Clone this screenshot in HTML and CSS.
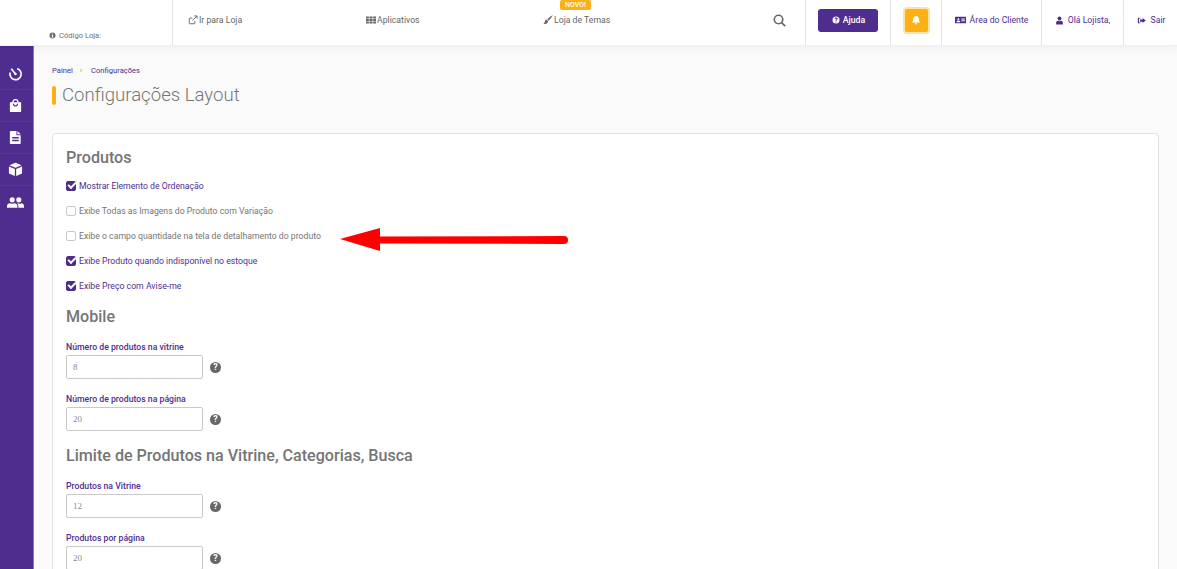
FILE: index.html
```html
<!DOCTYPE html>
<html lang="pt-BR">

<head>
    <meta charset="UTF-8">
    <meta name="viewport" content="width=device-width, initial-scale=1.0">
    <title>Configurações Layout</title>
    <link rel="stylesheet" href="styles.css">
</head>

<body>

    <header class="topbar">
        <div class="brand">
            <svg class="ico" viewBox="0 0 16 16"><path fill-rule="evenodd" d="M8 1a7 7 0 1 0 0 14A7 7 0 0 0 8 1zM7 3.500h2v2H7zM6.500 7h2.500v4h1v1.500H6V11h1V8.500h-.5z"/></svg>
            <span>Código Loja:</span>
        </div>
        <nav class="nav">
            <a class="nav-item">
                <svg class="ico ico-line" viewBox="0 0 16 16"><path d="M11 9.500V13a1 1 0 0 1-1 1H3a1 1 0 0 1-1-1V6a1 1 0 0 1 1-1h4M7 9l7-7M10 1.500h4.500V6"/></svg>
                Ir para Loja
            </a>
            <a class="nav-item">
                <svg class="ico" viewBox="0 0 16 16"><path d="M0 2.500h4.500v3H0zM5.500 2.500h5v3h-5zM11.500 2.500H16v3h-4.500zM0 6.500h4.500v3H0zM5.500 6.500h5v3h-5zM11.500 6.500H16v3h-4.500zM0 10.500h4.500v3H0zM5.500 10.500h5v3h-5zM11.500 10.500H16v3h-4.500z"/></svg>
                Aplicativos
            </a>
            <a class="nav-item nav-themes">
                <span class="badge">NOVO!</span>
                <svg class="ico" viewBox="0 0 16 16"><path d="M15.500.500c.5.500-4.500 7-6.500 8.500L7 7C8.500 5 15-.000 15.500.500zM6.300 7.800l2 2C8 12.500 5 15 .500 14.500 2.500 13.500 2.300 12 3 10c.6-1.500 2-2.300 3.300-2.200z"/></svg>
                Loja de Temas
            </a>
            <button class="search" aria-label="Buscar">
                <svg viewBox="0 0 16 16"><circle cx="6.800" cy="6.800" r="5.200"/><path d="M10.600 10.600l4.400 4.400"/></svg>
            </button>
        </nav>
        <div class="cell cell-help">
            <a class="btn-help">
                <svg class="ico" viewBox="0 0 16 16"><path fill-rule="evenodd" d="M8 1a7 7 0 1 0 0 14A7 7 0 0 0 8 1zM7 11h2v2H7zM8 3c2 0 3.300 1.100 3.300 2.700 0 1.300-.7 1.900-1.400 2.400-.6.400-.9.700-.9 1.400H7c0-1.300.5-2 1.300-2.500.6-.4.900-.7.900-1.200 0-.5-.5-.9-1.200-.9-.8 0-1.300.4-1.700 1L4.800 4.700C5.500 3.700 6.500 3 8 3z"/></svg>
                Ajuda
            </a>
        </div>
        <div class="cell cell-bell">
            <a class="btn-bell">
                <svg viewBox="0 0 16 16"><path d="M8 1c.6 0 1 .4 1 1 2.300.4 3.500 2.200 3.500 4.500 0 3 .8 4 2 5.500h-13c1.200-1.500 2-2.500 2-5.500C3.500 4.200 4.700 2.400 7 2c0-.6.400-1 1-1zM6.200 13h3.600c0 1-.8 2-1.800 2s-1.800-1-1.800-2z"/></svg>
            </a>
        </div>
        <a class="cell cell-link cell-client">
            <svg class="ico" viewBox="0 0 18 16"><path fill-rule="evenodd" d="M1 2.500h16a1 1 0 0 1 1 1v9a1 1 0 0 1-1 1H1a1 1 0 0 1-1-1v-9a1 1 0 0 1 1-1zM5.500 5a1.600 1.600 0 1 0 0 3.200 1.600 1.600 0 0 0 0-3.200zM2.500 11.500h6c0-1.500-1-2.500-3-2.500s-3 1-3 2.500zM10.500 5.500V7H16V5.500zM10.500 8.500V10H16V8.500z"/></svg>
            Área do Cliente
        </a>
        <a class="cell cell-link cell-user">
            <svg class="ico" viewBox="0 0 16 16"><path d="M8 1a3.500 3.500 0 1 1 0 7 3.500 3.500 0 0 1 0-7zM2 15v-2.500C2 10 3.500 8.500 5.500 8.500 6.300 9 7 9.300 8 9.300s1.700-.3 2.500-.8c2 0 3.500 1.500 3.500 4V15z"/></svg>
            Olá Lojista,
        </a>
        <a class="cell cell-link cell-exit">
            <svg class="ico" viewBox="0 0 16 16"><path d="M6 3H3a1.500 1.500 0 0 0-1.500 1.500v7A1.500 1.500 0 0 0 3 13h3v-1.500H3.500v-7H6zM10 3.500L15.500 8 10 12.500V10H5.500V6H10z"/></svg>
            <span>Sair</span>
        </a>
    </header>

    <div class="layout">
        <aside class="sidebar">
            <a class="side-item">
                <svg class="side-line" viewBox="0 0 16 16"><path d="M9.800 2.800A6 6 0 1 1 2.300 7"/><path d="M3.500 3L8 8.500"/><circle cx="8" cy="8.500" r="1.300" class="solid"/></svg>
            </a>
            <a class="side-item">
                <svg viewBox="0 0 16 16"><path fill-rule="evenodd" d="M4.500 4.500C4.700 2.300 6 1 8 1s3.300 1.300 3.500 3.500H14V14a1 1 0 0 1-1 1H3a1 1 0 0 1-1-1V4.500zM6 4.500h4C9.800 3.200 9.100 2.500 8 2.500S6.200 3.200 6 4.500zM5.200 6c.1 2 1.100 3 2.800 3s2.700-1 2.800-3h-1.300c-.1 1-.6 1.700-1.500 1.700S6.600 7 6.500 6z"/></svg>
            </a>
            <a class="side-item">
                <svg viewBox="0 0 16 16"><path fill-rule="evenodd" d="M3 1h6v4.500h4.500V14a1 1 0 0 1-1 1H3a1 1 0 0 1-1-1V2a1 1 0 0 1 1-1zM10 1l3.500 3.500H10zM4.500 7.500V9h7V7.500zM4.500 10.500V12h7v-1.500z"/></svg>
            </a>
            <a class="side-item">
                <svg viewBox="0 0 16 16"><path d="M8 .800l6.500 2.700L8 6.200 1.500 3.500zM1 4.700l6.300 2.700V15L1 12.200zM15 4.700v7.500L8.700 15V7.400z"/></svg>
            </a>
            <a class="side-item side-team">
                <svg viewBox="0 0 18 16"><path d="M5.500 2.500a2.700 2.700 0 1 1 0 5.400 2.700 2.700 0 0 1 0-5.400zM12.500 2.500a2.700 2.700 0 1 1 0 5.400 2.700 2.700 0 0 1 0-5.400zM0 13.500V12c0-2 1.500-3.300 3.200-3.300.7.400 1.400.6 2.300.6s1.600-.2 2.300-.6C9.500 8.700 11 10 11 12v1.500zM12 13.500V12c0-1.300-.5-2.400-1.400-3.200.6-.1.900-.1 1.100-.1.600.4 1.300.6 1.800.6.900 0 1.300-.2 1.700-.6 1.500 0 2.800 1.300 2.800 3.300v1.500z"/></svg>
            </a>
        </aside>

        <main class="content">
            <div class="crumbs">
                <a>Painel</a>
                <span class="crumb-sep">›</span>
                <a>Configurações</a>
            </div>
            <h1 class="page-title">Configurações Layout</h1>

            <section class="card">
                <h2>Produtos</h2>
                <label class="check on"><span class="box"></span>Mostrar Elemento de Ordenação</label>
                <label class="check"><span class="box"></span>Exibe Todas as Imagens do Produto com Variação</label>
                <label class="check"><span class="box"></span>Exibe o campo quantidade na tela de detalhamento do produto</label>
                <label class="check on"><span class="box"></span>Exibe Produto quando indisponível no estoque</label>
                <label class="check on"><span class="box"></span>Exibe Preço com Avise-me</label>

                <h2 class="sub">Mobile</h2>
                <div class="field">
                    <label>Número de produtos na vitrine</label>
                    <div class="field-row"><input value="8"><span class="help">?</span></div>
                </div>
                <div class="field">
                    <label>Número de produtos na página</label>
                    <div class="field-row"><input value="20"><span class="help">?</span></div>
                </div>

                <h2 class="sub">Limite de Produtos na Vitrine, Categorias, Busca</h2>
                <div class="field">
                    <label>Produtos na Vitrine</label>
                    <div class="field-row"><input value="12"><span class="help">?</span></div>
                </div>
                <div class="field">
                    <label>Produtos por página</label>
                    <div class="field-row"><input value="20"><span class="help">?</span></div>
                </div>
            </section>
        </main>
    </div>

    <!-- seta desenhada por cima do print -->
    <svg class="arrow" viewBox="0 0 240 30" aria-hidden="true">
        <path d="M41 11.500l184-.5a4 4 0 0 1 0 8l-184-.5V26L1 14 41 3z"/>
    </svg>

</body>

</html>
```

FILE: styles.css
```css
* {
    box-sizing: border-box;
}

html,
body {
    height: 100%;
}

body {
    margin: 0;
    overflow: hidden;
    position: relative;
    background-color: #fafafa;
    color: #757575;
    font-family: Roboto, "Liberation Sans", sans-serif;
    font-size: 8.7px;
}

a {
    color: inherit;
    text-decoration: none;
}

.ico {
    width: 10px;
    height: 10px;
    fill: currentColor;
    flex: none;
}

.ico-line {
    fill: none;
    stroke: currentColor;
    stroke-width: 1.5;
}

/* topo */
.topbar {
    display: flex;
    position: relative;
    z-index: 2;
    height: 46px;
    background: #fff;
    border-bottom: 1px solid #efefef;
    box-shadow: 0 2px 8px rgba(0, 0, 0, .05);
}

.brand {
    display: flex;
    align-items: flex-end;
    gap: 3px;
    width: 173px;
    padding: 0 0 5px 49px;
    border-right: 1px solid #e4e4e4;
    font-size: 7.6px;
    color: #6f6f6f;
}

.brand .ico {
    width: 7px;
    height: 7px;
    margin-bottom: 1px;
}

.nav {
    display: flex;
    flex: 1;
    align-items: center;
    padding: 0 0 5px 15px;
    color: #666;
}

.nav-item {
    display: flex;
    align-items: center;
    gap: 1px;
    position: relative;
    width: 178px;
    height: 40px;
}

.nav-item .ico {
    width: 10px;
    height: 10px;
}

.nav-themes {
    margin-left: -1px;
}

.badge {
    position: absolute;
    left: 17px;
    top: 0;
    padding: 0 5px;
    height: 10px;
    line-height: 10px;
    border-radius: 2px;
    background: #fbb116;
    color: #fff;
    font-size: 7px;
    font-weight: 500;
}

.search {
    margin-left: auto;
    margin-right: 19px;
    padding: 0;
    border: 0;
    background: none;
    width: 13px;
    height: 13px;
}

.search svg {
    display: block;
    fill: none;
    stroke: #666;
    stroke-width: 2;
}

.cell {
    display: flex;
    flex: none;
    align-items: center;
    justify-content: center;
    padding-bottom: 5px;
    border-left: 1px solid #e4e4e4;
}

.cell-help {
    width: 85px;
}

.btn-help {
    display: flex;
    align-items: center;
    justify-content: center;
    gap: 3px;
    width: 60px;
    height: 23px;
    padding-left: 1px;
    border-radius: 3px;
    background: #4f2d8f;
    color: #fff;
    font-weight: 500;
}

.btn-help .ico {
    width: 8px;
    height: 8px;
}

.cell-bell {
    width: 51px;
}

.btn-bell {
    display: flex;
    align-items: center;
    justify-content: center;
    width: 27px;
    height: 27px;
    border: 2px solid #fde2a6;
    border-radius: 4px;
    background: #fbb116;
}

.btn-bell svg {
    width: 10px;
    height: 10px;
    fill: #fff;
}

.cell-link {
    gap: 4px;
    color: #4f2d8f;
}

.cell-client {
    width: 100px;
}

.cell-client .ico {
    width: 11px;
}

.cell-user {
    width: 82px;
}

.cell-user .ico {
    width: 9px;
    height: 9px;
}

.cell-exit {
    width: 54px;
    gap: 5px;
    padding-left: 1px;
}

.cell-exit .ico {
    width: 9px;
    height: 9px;
}

/* corpo */
.layout {
    display: flex;
    height: calc(100% - 46px);
}

.sidebar {
    flex: none;
    width: 34px;
    padding-top: 12px;
    background: #4f2d8f;
    border-right: 1px solid #8e74bd;
}

.side-item {
    display: flex;
    align-items: center;
    justify-content: center;
    height: 32px;
    padding-right: 2px;
    border-bottom: 1px solid #583696;
}

.side-item:last-child {
    border-bottom: 0;
}

.side-item svg {
    width: 15px;
    height: 15px;
    fill: #fff;
}

.side-team svg {
    width: 17px;
    height: 17px;
}

.side-line {
    fill: none !important;
    stroke: #fff;
    stroke-width: 1.800;
}

.side-line .solid {
    fill: #fff;
    stroke: none;
}

.content {
    flex: 1;
    min-width: 0;
    padding: 18px 18px 0;
}

.crumbs {
    display: flex;
    gap: 7px;
    height: 12px;
    align-items: center;
    font-size: 7.6px;
    color: #4f2d8f;
}

.crumb-sep {
    margin-right: 2px;
    color: #888;
}

.page-title {
    margin: 6px 0 0;
    padding-left: 10px;
    position: relative;
    font-size: 18.6px;
    line-height: 26px;
    font-weight: 300;
    color: #757575;
}

.page-title::before {
    content: '';
    position: absolute;
    left: 0;
    top: 4px;
    width: 4px;
    height: 19px;
    border-radius: 2px;
    background: #fbb116;
}

.card {
    margin-top: 25px;
    padding: 14px 13px 0;
    height: 600px;
    background: #fff;
    border: 1px solid #e2e2e2;
    border-radius: 4px;
}

.card h2 {
    margin: 0 0 6px;
    font-size: 16.1px;
    line-height: 19px;
    font-weight: 500;
    color: #757575;
}

.card h2.sub {
    margin: 9px 0 15px;
}

.card .field + h2.sub {
    margin-top: 15px;
}

.check {
    display: flex;
    align-items: center;
    gap: 3px;
    height: 25px;
    color: #757575;
}

.check.on {
    color: #4f2d8f;
}

.box {
    position: relative;
    width: 10px;
    height: 10px;
    border: 1px solid #c9c9c9;
    border-radius: 2px;
    background: #fff;
}

.check.on .box {
    border-color: #4f2d8f;
    background: #4f2d8f;
}

.check.on .box::after {
    content: '';
    position: absolute;
    left: 1px;
    top: 0;
    width: 6px;
    height: 3px;
    border-left: 2px solid #fff;
    border-bottom: 2px solid #fff;
    transform: rotate(-45deg);
}

.field {
    margin-bottom: 14px;
}

.field label {
    display: block;
    height: 12px;
    line-height: 12px;
    margin-bottom: 2px;
    font-weight: 500;
    color: #4f2d8f;
}

.field-row {
    display: flex;
    align-items: center;
    gap: 7px;
}

.field input {
    width: 137px;
    height: 24px;
    padding: 0 6px;
    border: 1px solid #c9c9c9;
    border-radius: 2px;
    background: #fff;
    color: #8a8a8a;
    font-family: "Liberation Serif", serif;
    font-size: 9px;
}

.help {
    display: flex;
    align-items: center;
    justify-content: center;
    width: 11px;
    height: 11px;
    border-radius: 50%;
    background: #666;
    color: #fff;
    font-size: 9px;
    font-weight: 700;
}

/* seta sobre o conteudo */
.arrow {
    position: absolute;
    left: 339px;
    top: 225px;
    width: 240px;
    height: 30px;
    fill: #f00;
}
```
